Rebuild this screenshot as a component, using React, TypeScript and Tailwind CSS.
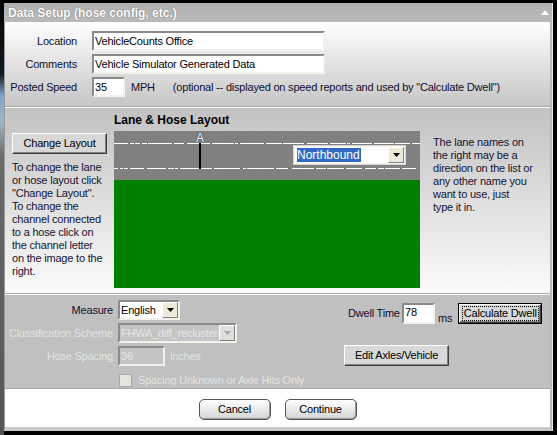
import React from "react";

const font = { fontFamily: '"Liberation Sans", Arial, sans-serif' };

const leftLines = [
  "To change the lane",
  "or hose layout click",
  '"Change Layout".',
  "To change the",
  "channel connected",
  "to a hose click on",
  "the channel letter",
  "on the image to the",
  "right.",
];

const rightLines = [
  "The lane names on",
  "the right may be a",
  "direction on the list or",
  "any other name you",
  "want to use, just",
  "type it in.",
];

// gaps punched in the white lane lines: [x, width]
const topGaps = [
  [14, 2], [20, 1], [26, 2], [33, 1], [58, 2], [70, 3], [96, 2], [120, 1], [124, 2],
  [150, 2], [168, 1], [190, 3], [214, 2], [232, 1], [236, 2], [258, 2], [280, 1], [296, 2],
];
const bottomGaps = [
  [4, 2], [9, 1], [14, 2], [30, 3], [52, 2], [60, 1], [64, 2], [98, 2], [126, 3], [132, 1],
  [160, 2], [174, 4], [200, 2], [212, 1], [230, 2], [248, 3], [262, 2], [270, 1], [286, 2],
];

const Arrow = ({ disabled }: { disabled?: boolean }) => (
  <svg width="7" height="4" viewBox="0 0 7 4">
    <path d="M0 0h7L3.5 4z" fill={disabled ? "#a8a8a8" : "#000"} />
  </svg>
);

const Road = () => (
  <svg width="306" height="157" viewBox="0 0 306 157" className="block" shapeRendering="crispEdges">
    <defs>
      <filter id="grain">
        <feTurbulence type="fractalNoise" baseFrequency="0.9" numOctaves="1" seed="3" />
        <feColorMatrix type="matrix" values="0 0 0 0 0.5  0 0 0 0 0.5  0 0 0 0 0.5  0 0 0 0.35 0" />
      </filter>
    </defs>
    <rect x="0" y="0" width="306" height="49" fill="#7b7b7b" />
    <rect x="0" y="0" width="306" height="49" filter="url(#grain)" opacity="0.5" />
    <rect x="0" y="49" width="306" height="108" fill="#008000" />
    <rect x="0" y="12" width="306" height="1" fill="#ffffff" />
    <rect x="0" y="37" width="302" height="1" fill="#ffffff" />
    {topGaps.map(([x, w]) => (
      <rect key={`t${x}`} x={x} y="12" width={w} height="1" fill="#7b7b7b" />
    ))}
    {bottomGaps.map(([x, w]) => (
      <rect key={`b${x}`} x={x} y="37" width={w} height="1" fill="#7b7b7b" />
    ))}
    <rect x="85" y="12" width="2" height="26" fill="#000" />
  </svg>
);

const Field = ({ value, w, disabled }: { value: string; w: string; disabled?: boolean }) => (
  <div
    className={`${w} h-[20px] border-2 border-t-[#8a8a8a] border-l-[#8a8a8a] border-b-[#f2f1ea] border-r-[#f2f1ea] flex items-center pl-[1px] whitespace-nowrap ${
      disabled ? "bg-[#c4c4c4] text-[#e6e6e6]" : "bg-white text-black"
    }`}
  >
    {value}
  </div>
);

const Select = ({ value, w, disabled }: { value: string; w: string; disabled?: boolean }) => (
  <div
    className={`${w} h-[20px] border-2 border-t-[#8a8a8a] border-l-[#8a8a8a] border-b-[#f2f1ea] border-r-[#f2f1ea] flex items-center justify-between pl-[1px] ${
      disabled ? "bg-[#c4c4c4] text-[#e6e6e6]" : "bg-white text-black"
    }`}
  >
    <span className="overflow-hidden whitespace-nowrap">{value}</span>
    <div
      className={`w-[16px] h-[16px] shrink-0 flex items-center justify-center border border-t-white border-l-white border-b-[#808080] border-r-[#808080] ${
        disabled ? "bg-[#dedede]" : "bg-[#ece9d8]"
      }`}
    >
      <Arrow disabled={disabled} />
    </div>
  </div>
);

const Btn = ({ label, w, focus }: { label: string; w: string; focus?: boolean }) => (
  <div
    className={`${w} h-[21px] shrink-0 flex items-center justify-center bg-[#d8d8d8] text-black whitespace-nowrap ${
      focus ? "border border-black" : ""
    }`}
  >
    <div className="w-full h-full flex items-center justify-center border border-t-white border-l-white border-b-[#404040] border-r-[#404040] shadow-[inset_-1px_-1px_0_#808080]">
      <span className={focus ? "outline outline-1 outline-dotted outline-black px-[1px] leading-[13px]" : ""}>{label}</span>
    </div>
  </div>
);

const RoundBtn = ({ label }: { label: string }) => (
  <div className="w-[72px] h-[21px] rounded-[5px] border border-[#555] bg-gradient-to-b from-white to-[#d4d4d4] flex items-center justify-center text-black shadow-[inset_-1px_-1px_0_#9a9a9a]">
    {label}
  </div>
);

export default function App() {
  return (
    <div style={font} className="w-[557px] h-[435px] bg-black flex text-[11px] tracking-[-0.2px] overflow-hidden">
      <div className="w-[4px] h-full bg-[linear-gradient(to_bottom,#050505_0%,#101820_17%,#7fa3c8_22%,#a0b6c8_28%,#6a6a6a_36%,#555_100%)]" />
      <div className="w-[549px] h-[428px] mt-[3px] flex flex-col border-r border-[#e8e8e8]">
        <div className="h-[19px] bg-gradient-to-b from-[#b0b0b0] to-[#bababa] flex items-center justify-between pl-[4px] pr-[3px]">
          <span className="text-white font-bold text-[12px] tracking-normal [text-shadow:0_0_1px_#555]">
            Data Setup (hose config, etc.)
          </span>
          <svg width="8" height="5" viewBox="0 0 8 5">
            <path d="M0 5L4 0L8 5z" fill="#fff" />
          </svg>
        </div>

        <div className="flex-1 flex flex-col border-l border-[#9a9a9a] border-r-2 border-r-[#b8b8b8] border-b-4 border-b-[#c8c8c8]">
          {/* header fields */}
          <div className="h-[84px] bg-gradient-to-b from-white to-[#c6c6c6] pt-[9px] flex flex-col gap-[3px] text-[#101030]">
            <div className="flex items-center">
              <div className="w-[72px] text-right">Location</div>
              <div className="ml-[15px]">
                <Field value="VehicleCounts Office" w="w-[233px]" />
              </div>
            </div>
            <div className="flex items-center">
              <div className="w-[72px] text-right">Comments</div>
              <div className="ml-[15px]">
                <Field value="Vehicle Simulator Generated Data" w="w-[233px]" />
              </div>
            </div>
            <div className="flex items-center whitespace-nowrap">
              <div className="w-[72px] text-right">Posted Speed</div>
              <div className="ml-[15px]">
                <Field value="35" w="w-[33px]" />
              </div>
              <span className="ml-[6px]">MPH</span>
              <span className="ml-[18px]">(optional -- displayed on speed reports and used by "Calculate Dwell")</span>
            </div>
          </div>
          <div className="h-[2px] border-t border-[#a8a8a8] border-b border-b-white" />

          {/* layout */}
          <div className="h-[185px] bg-gradient-to-b from-[#c2c2c2] to-[#fbfbfb] flex text-[#141432]">
            <div className="w-[109px] pl-[7px] pt-[25px] flex flex-col">
              <Btn label="Change Layout" w="w-[95px]" />
              <div className="mt-[7px] leading-[13px]">
                {leftLines.map((l) => (
                  <div key={l} className="whitespace-nowrap">{l}</div>
                ))}
              </div>
            </div>
            <div className="w-[306px] flex flex-col">
              <div className="h-[23px] pt-[5px] font-bold text-[12px] tracking-normal text-black leading-[14px]">Lane &amp; Hose Layout</div>
              <div className="relative">
                <Road />
                <span className="absolute left-[82px] top-[1px] text-[12px] leading-[12px] tracking-normal text-white [text-shadow:0_0_1px_#203060,0_0_1px_#203060]">
                  A
                </span>
                <div className="absolute left-[179px] top-[14px] w-[113px] h-[20px] bg-[#f4f3ee] p-[1px] border border-[#d8d8d8]">
                  <div className="w-full h-full bg-white flex items-center justify-between pl-[2px] text-[12px] tracking-normal">
                    <span className="bg-[#316ac5] text-white leading-[14px] pr-[1px]">Northbound</span>
                    <div className="w-[16px] h-[16px] flex items-center justify-center bg-[#ece9d8] border border-t-white border-l-white border-b-[#808080] border-r-[#808080]">
                      <Arrow />
                    </div>
                  </div>
                </div>
              </div>
            </div>
            <div className="pl-[13px] pt-[28px] leading-[13px]">
              {rightLines.map((l) => (
                <div key={l} className="whitespace-nowrap">{l}</div>
              ))}
            </div>
          </div>
          <div className="h-[2px] border-t border-[#a8a8a8] border-b border-b-white" />

          {/* settings */}
          <div className="h-[93px] bg-[#c0c0c0] flex pt-[5px] whitespace-nowrap">
            <div className="w-[338px] shrink-0 flex flex-col gap-[3px]">
              <div className="flex items-center">
                <div className="w-[108px] text-right text-[#101030]">Measure</div>
                <div className="ml-[5px]">
                  <Select value="English" w="w-[62px]" />
                </div>
              </div>
              <div className="flex items-center">
                <div className="w-[108px] text-right text-[#e2e2e2]">Classification Scheme</div>
                <div className="ml-[5px]">
                  <Select value="FHWA_diff_reclusteri" w="w-[119px]" disabled />
                </div>
              </div>
              <div className="flex items-center">
                <div className="w-[108px] text-right text-[#e2e2e2]">Hose Spacing</div>
                <div className="ml-[5px]">
                  <Field value="36" w="w-[47px]" disabled />
                </div>
                <span className="ml-[5px] text-[#e2e2e2]">inches</span>
              </div>
              <div className="flex items-center mt-[3px]">
                <div className="ml-[114px] w-[13px] h-[13px] border border-[#a9a9a0] bg-[#e6e4dc]" />
                <span className="ml-[6px] text-[#e2e2e2]">Spacing Unknown or Axle Hits Only</span>
              </div>
            </div>
            <div className="flex flex-col">
              <div className="flex items-center">
                <span className="ml-[5px] w-[54px] text-[#101030]">Dwell Time</span>
                <div className="w-[33px] h-[21px] border-2 border-t-[#8a8a8a] border-l-[#8a8a8a] border-b-[#f2f1ea] border-r-[#f2f1ea] bg-white pl-[1px] leading-[14px]">
                  78
                </div>
                <span className="ml-[3px] mt-[10px] text-[#101030]">ms</span>
                <div className="ml-[6px]">
                  <Btn label="Calculate Dwell" w="w-[84px]" focus />
                </div>
              </div>
              <div className="mt-[18px] ml-[1px]">
                <Btn label="Edit Axles/Vehicle" w="w-[105px]" />
              </div>
            </div>
          </div>
          <div className="h-[2px] border-t border-[#a8a8a8] border-b border-b-white" />

          {/* footer */}
          <div className="flex-1 bg-white flex items-start justify-center gap-[14px] pt-[9px]">
            <RoundBtn label="Cancel" />
            <RoundBtn label="Continue" />
          </div>
        </div>
      </div>
    </div>
  );
}
